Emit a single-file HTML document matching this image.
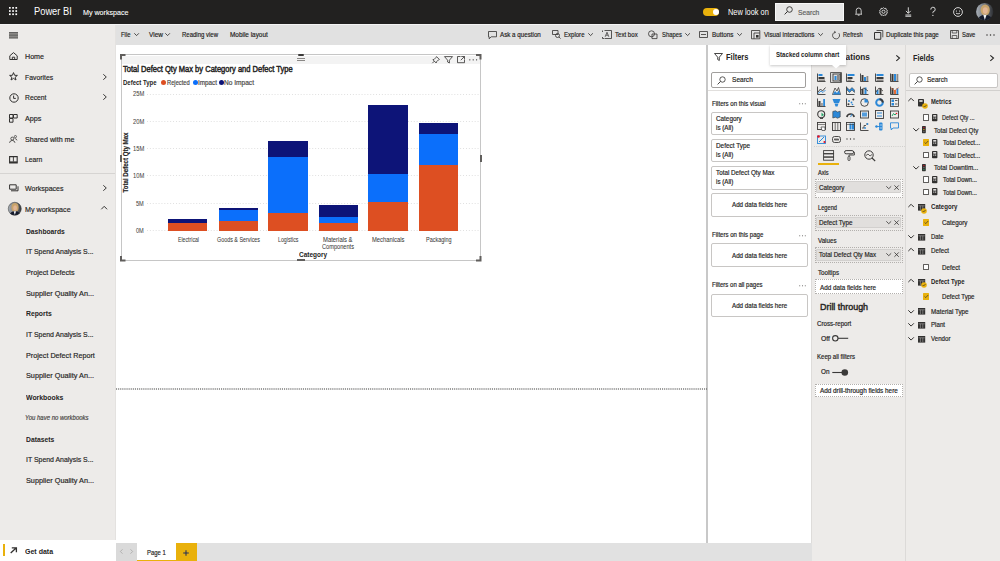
<!DOCTYPE html>
<html><head><meta charset="utf-8">
<style>
*{margin:0;padding:0;box-sizing:border-box}
html,body{width:1000px;height:561px;overflow:hidden;background:#fff;font-family:"Liberation Sans",sans-serif;color:#252423}
.a{position:absolute;white-space:nowrap}
svg.a{overflow:visible}
div.a{-webkit-text-stroke:0.18px currentColor}
</style></head><body>
<div class="a" style="left:0px;top:0px;width:1000px;height:24px;background:#222120;"></div>
<div class="a" style="left:0px;top:24px;width:116px;height:537px;background:#edebe9;"></div>
<div class="a" style="left:115px;top:24px;width:1px;height:516px;background:#e4e2e0;"></div>
<div class="a" style="left:116px;top:24px;width:884px;height:21px;background:#e1e1e1;"></div>
<div class="a" style="left:116px;top:45px;width:591px;height:498px;background:#ffffff;"></div>
<div class="a" style="left:706px;top:45px;width:1.5px;height:498px;background:#c8c8c8;"></div>
<div class="a" style="left:707.5px;top:45px;width:104.5px;height:498px;background:#ffffff;"></div>
<div class="a" style="left:811px;top:45px;width:1.5px;height:516px;background:#dedcda;"></div>
<div class="a" style="left:812px;top:45px;width:94px;height:516px;background:#edebe9;"></div>
<div class="a" style="left:905.3px;top:45px;width:1.5px;height:516px;background:#dcdad8;"></div>
<div class="a" style="left:906px;top:45px;width:94px;height:516px;background:#edebe9;"></div>
<div class="a" style="left:116px;top:543px;width:696px;height:18px;background:#e1e1e1;"></div>
<div class="a" style="left:0px;top:24px;width:1000px;height:1px;background:#f4f4f4;"></div>
<svg class="a" style="left:8.6px;top:7.4px;" width="9" height="9" viewBox="0 0 9 9"><rect x="0.0" y="0.0" width="1.7" height="1.7" fill="#fff"/><rect x="0.0" y="3.2" width="1.7" height="1.7" fill="#fff"/><rect x="0.0" y="6.4" width="1.7" height="1.7" fill="#fff"/><rect x="3.2" y="0.0" width="1.7" height="1.7" fill="#fff"/><rect x="3.2" y="3.2" width="1.7" height="1.7" fill="#fff"/><rect x="3.2" y="6.4" width="1.7" height="1.7" fill="#fff"/><rect x="6.4" y="0.0" width="1.7" height="1.7" fill="#fff"/><rect x="6.4" y="3.2" width="1.7" height="1.7" fill="#fff"/><rect x="6.4" y="6.4" width="1.7" height="1.7" fill="#fff"/></svg>
<div class="a" style="left:33.60px;top:6.00px;font-size:10px;line-height:11px;color:#ffffff;transform:scaleX(0.9315);transform-origin:0 0;-webkit-text-stroke:0">Power BI</div>
<div class="a" style="left:83.30px;top:8.00px;font-size:7.6px;line-height:9px;color:#ffffff;transform:scaleX(0.9375);transform-origin:0 0;-webkit-text-stroke:0.1px currentColor">My workspace</div>
<div class="a" style="left:702.9px;top:7.5px;width:16.6px;height:8.5px;background:#e9b10c;border-radius:4.25px"></div>
<div class="a" style="left:712.8px;top:8.9px;width:5.8px;height:5.8px;background:#fff;border-radius:50%"></div>
<div class="a" style="left:727.60px;top:8.00px;font-size:8.2px;line-height:9px;color:#ffffff;transform:scaleX(0.9054);transform-origin:0 0;-webkit-text-stroke:0">New look on</div>
<div class="a" style="left:775.3px;top:2.9px;width:68.6px;height:17.9px;background:#e6e6e6;border:1px solid #f8f8f8"></div>
<svg class="a" style="left:784px;top:6px;" width="9" height="9" viewBox="0 0 9 9"><circle cx="5.5" cy="3.5" r="2.8" fill="none" stroke="#323130" stroke-width="0.9"/><path d="M3.5 5.5L0.6 8.4" stroke="#323130" stroke-width="1"/></svg>
<div class="a" style="left:797.50px;top:8.00px;font-size:7.2px;line-height:9px;color:#605e5c;transform:scaleX(0.9350);transform-origin:0 0;">Search</div>
<svg class="a" style="left:854.6px;top:7.3px;" width="7.4" height="8.8" viewBox="0 0 7.4 8.8"><path d="M1.2 6.6V3.6A2.5 2.6 0 0 1 6.2 3.6V6.6L6.9 7.2H0.5Z" fill="none" stroke="#ffffff" stroke-width="0.75"/><path d="M2.8 8.2H4.6" stroke="#ffffff" stroke-width="0.75"/></svg>
<svg class="a" style="left:878.9px;top:7.1px;" width="9" height="9" viewBox="0 0 9 9"><path d="M4.5 0.6L5.5 1.6L6.9 1.3L7.2 2.7L8.4 3.5L7.8 4.8L8.4 6.1L7.2 6.8L6.9 8.2L5.5 7.9L4.5 8.9L3.5 7.9L2.1 8.2L1.8 6.8L0.6 6.1L1.2 4.8L0.6 3.5L1.8 2.7L2.1 1.3L3.5 1.6Z" fill="none" stroke="#fff" stroke-width="0.75"/><circle cx="4.5" cy="4.75" r="1.6" fill="none" stroke="#fff" stroke-width="0.75"/></svg>
<svg class="a" style="left:904.8px;top:6.8px;" width="6.6" height="9.8" viewBox="0 0 6.6 9.8"><path d="M3.3 0.3V6.2M0.9 3.9L3.3 6.3L5.7 3.9M0.4 8H6.2M0.4 9.3H6.2" fill="none" stroke="#ffffff" stroke-width="0.8"/></svg>
<svg class="a" style="left:930.4px;top:7.3px;" width="6" height="9.4" viewBox="0 0 6 9.4"><path d="M0.8 2.6A2.2 2.2 0 1 1 3.2 4.6Q2.9 5 2.9 6.2" fill="none" stroke="#ffffff" stroke-width="0.8"/><circle cx="2.9" cy="8.4" r="0.55" fill="#ffffff"/></svg>
<svg class="a" style="left:953.4px;top:6.6px;" width="10" height="10" viewBox="0 0 10 10"><circle cx="5" cy="5" r="4.4" fill="none" stroke="#ffffff" stroke-width="0.8"/><circle cx="3.4" cy="4" r="0.6" fill="#ffffff"/><circle cx="6.6" cy="4" r="0.6" fill="#ffffff"/><path d="M3 6.2Q5 7.6 7 6.2" fill="none" stroke="#ffffff" stroke-width="0.75"/></svg>
<svg class="a" style="left:976.2px;top:3.4px;" width="17.4" height="17.4" viewBox="0 0 17.4 17.4"><defs><clipPath id="av"><circle cx="8.7" cy="8.7" r="8.6"/></clipPath><linearGradient id="avg" x1="0" x2="1"><stop offset="0" stop-color="#a9b0b8"/><stop offset="0.55" stop-color="#6a6e74"/><stop offset="1" stop-color="#26282c"/></linearGradient></defs><g clip-path="url(#av)"><rect width="18" height="18" fill="url(#avg)"/><ellipse cx="9.2" cy="7" rx="4.6" ry="5.6" fill="#c8a46c"/><ellipse cx="9.3" cy="7.6" rx="2.5" ry="3.3" fill="#e2b595"/><path d="M1.5 18Q2.5 12 9 11.8Q15.5 12 16.8 18Z" fill="#141a2c"/><path d="M7.3 11.8L8.8 17L10.6 11.8Z" fill="#f2f4f8"/></g></svg>
<svg class="a" style="left:9.3px;top:31.8px;" width="9" height="7" viewBox="0 0 9 7"><rect x="0" y="0" width="9" height="6.4" fill="#8a8886"/><path d="M0 0.5H9M0 3.2H9M0 5.9H9" stroke="#5f5e5c" stroke-width="0.9"/></svg>
<div class="a" style="left:24.90px;top:52.00px;font-size:8.0px;line-height:9px;color:#252423;transform:scaleX(0.8902);transform-origin:0 0;">Home</div>
<div class="a" style="left:24.90px;top:73.00px;font-size:8.0px;line-height:9px;color:#252423;transform:scaleX(0.8539);transform-origin:0 0;">Favorites</div>
<div class="a" style="left:24.90px;top:93.00px;font-size:8.0px;line-height:9px;color:#252423;transform:scaleX(0.8439);transform-origin:0 0;">Recent</div>
<div class="a" style="left:24.90px;top:114.00px;font-size:8.0px;line-height:9px;color:#252423;transform:scaleX(0.8994);transform-origin:0 0;">Apps</div>
<div class="a" style="left:24.90px;top:135.00px;font-size:8.0px;line-height:9px;color:#252423;transform:scaleX(0.8904);transform-origin:0 0;">Shared with me</div>
<div class="a" style="left:24.90px;top:155.00px;font-size:8.0px;line-height:9px;color:#252423;transform:scaleX(0.8501);transform-origin:0 0;">Learn</div>
<div class="a" style="left:24.90px;top:184.00px;font-size:8.0px;line-height:9px;color:#252423;transform:scaleX(0.8775);transform-origin:0 0;">Workspaces</div>
<div class="a" style="left:24.90px;top:205.00px;font-size:8.0px;line-height:9px;color:#252423;transform:scaleX(0.8919);transform-origin:0 0;">My workspace</div>
<svg class="a" style="left:9px;top:51.8px;" width="9" height="8" viewBox="0 0 9 8"><path d="M0.8 3.8L4.5 0.6L8.2 3.8V7.5H0.8Z" fill="none" stroke="#323130" stroke-width="1.0"/><path d="M3.3 7.5V5.2H5.7V7.5" fill="none" stroke="#323130" stroke-width="1.0"/></svg>
<svg class="a" style="left:9px;top:72.3px;" width="9" height="9" viewBox="0 0 9 9"><path d="M4.5 0.6L5.6 3.3L8.4 3.4L6.2 5.2L7 8L4.5 6.4L2 8L2.8 5.2L0.6 3.4L3.4 3.3Z" fill="none" stroke="#323130" stroke-width="1.0"/></svg>
<svg class="a" style="left:8.6px;top:93px;" width="10" height="10" viewBox="0 0 10 10"><circle cx="5" cy="5" r="4.2" fill="none" stroke="#323130" stroke-width="1.0"/><path d="M4.6 2.6V5.4H6.8" fill="none" stroke="#323130" stroke-width="1.0"/></svg>
<svg class="a" style="left:8.8px;top:113.8px;" width="9" height="9" viewBox="0 0 9 9"><path d="M0.5 0.5H4V4H0.5ZM0.5 4.5H4V8.2H0.5ZM4.5 0.5H8.2V4H4.5Z" fill="none" stroke="#323130" stroke-width="1.0"/></svg>
<svg class="a" style="left:9.3px;top:134.6px;" width="8.5" height="8" viewBox="0 0 8.5 8"><circle cx="3.3" cy="3.6" r="1.5" fill="none" stroke="#323130" stroke-width="0.8"/><path d="M0.5 7.8Q1 5.4 3.3 5.4Q5.5 5.4 6 7.8" fill="none" stroke="#323130" stroke-width="0.8"/><circle cx="6.4" cy="1.6" r="1.1" fill="none" stroke="#323130" stroke-width="0.7"/><path d="M5.8 3.6Q7.6 3.6 8 5.4" fill="none" stroke="#323130" stroke-width="0.7"/></svg>
<svg class="a" style="left:8.8px;top:155.6px;" width="9" height="7.6" viewBox="0 0 9 7.6"><path d="M0.6 0.6H8.2V7H0.6Z" fill="none" stroke="#323130" stroke-width="1.1"/><path d="M4.4 0.6V5.6" fill="none" stroke="#323130" stroke-width="0.9"/><rect x="0.6" y="5.4" width="7.6" height="1.6" fill="#323130"/></svg>
<svg class="a" style="left:8.5px;top:184.2px;" width="10" height="8" viewBox="0 0 10 8"><path d="M0.6 0.8H7.2V5.2H0.6Z" fill="none" stroke="#323130" stroke-width="1.0"/><path d="M2 6.8H9V2.3" fill="none" stroke="#323130" stroke-width="1.0"/></svg>
<svg class="a" style="left:7.8px;top:201.8px;" width="13.5" height="13.5" viewBox="0 0 13.5 13.5"><defs><clipPath id="av2"><circle cx="6.75" cy="6.75" r="6.6"/></clipPath><linearGradient id="avg2" x1="0" x2="1"><stop offset="0" stop-color="#a9b0b8"/><stop offset="0.6" stop-color="#6a6e74"/><stop offset="1" stop-color="#303236"/></linearGradient></defs><g clip-path="url(#av2)"><rect width="14" height="14" fill="url(#avg2)"/><ellipse cx="7" cy="5.4" rx="3.6" ry="4.4" fill="#c8a46c"/><ellipse cx="7.1" cy="5.9" rx="1.9" ry="2.6" fill="#e2b595"/><path d="M1 14Q2 9.3 7 9.2Q12 9.3 13 14Z" fill="#141a2c"/><path d="M5.7 9.2L6.8 13L8.1 9.2Z" fill="#f2f4f8"/></g><circle cx="6.75" cy="6.75" r="6.5" fill="none" stroke="#3b3a39" stroke-width="0.5"/></svg>
<svg class="a" style="left:103px;top:73.5px;" width="3.6" height="6" viewBox="0 0 3.6 6"><path d="M0.3 0.3L3.3000000000000003 3.0L0.3 5.7" fill="none" stroke="#252423" stroke-width="0.9"/></svg>
<svg class="a" style="left:103px;top:94.1px;" width="3.6" height="6" viewBox="0 0 3.6 6"><path d="M0.3 0.3L3.3000000000000003 3.0L0.3 5.7" fill="none" stroke="#252423" stroke-width="0.9"/></svg>
<svg class="a" style="left:103px;top:185.3px;" width="3.6" height="6" viewBox="0 0 3.6 6"><path d="M0.3 0.3L3.3000000000000003 3.0L0.3 5.7" fill="none" stroke="#252423" stroke-width="0.9"/></svg>
<svg class="a" style="left:101.3px;top:206.2px;" width="6.4" height="3.6" viewBox="0 0 6.4 3.6"><path d="M0.3 3.3000000000000003L3.2 0.3L6.1000000000000005 3.3000000000000003" fill="none" stroke="#252423" stroke-width="0.9"/></svg>
<div class="a" style="left:0px;top:173.2px;width:115px;height:0.8px;background:#d6d4d2;"></div>
<div class="a" style="left:26.00px;top:227.00px;font-size:7.8px;line-height:9px;color:#252423;font-weight:bold;-webkit-text-stroke:0;transform:scaleX(0.8610);transform-origin:0 0;">Dashboards</div>
<div class="a" style="left:26.00px;top:247.00px;font-size:7.8px;line-height:9px;color:#252423;transform:scaleX(0.8865);transform-origin:0 0;">IT Spend Analysis S...</div>
<div class="a" style="left:26.00px;top:268.00px;font-size:7.8px;line-height:9px;color:#252423;transform:scaleX(0.9191);transform-origin:0 0;">Project Defects</div>
<div class="a" style="left:26.00px;top:289.00px;font-size:7.8px;line-height:9px;color:#252423;transform:scaleX(0.9339);transform-origin:0 0;">Supplier Quality An...</div>
<div class="a" style="left:26.00px;top:309.00px;font-size:7.8px;line-height:9px;color:#252423;font-weight:bold;-webkit-text-stroke:0;transform:scaleX(0.8721);transform-origin:0 0;">Reports</div>
<div class="a" style="left:26.00px;top:330.00px;font-size:7.8px;line-height:9px;color:#252423;transform:scaleX(0.8865);transform-origin:0 0;">IT Spend Analysis S...</div>
<div class="a" style="left:26.00px;top:351.00px;font-size:7.8px;line-height:9px;color:#252423;transform:scaleX(0.9229);transform-origin:0 0;">Project Defect Report</div>
<div class="a" style="left:26.00px;top:371.00px;font-size:7.8px;line-height:9px;color:#252423;transform:scaleX(0.9339);transform-origin:0 0;">Supplier Quality An...</div>
<div class="a" style="left:26.00px;top:393.00px;font-size:7.8px;line-height:9px;color:#252423;font-weight:bold;-webkit-text-stroke:0;transform:scaleX(0.8839);transform-origin:0 0;">Workbooks</div>
<div class="a" style="left:26.00px;top:435.00px;font-size:7.8px;line-height:9px;color:#252423;font-weight:bold;-webkit-text-stroke:0;transform:scaleX(0.8673);transform-origin:0 0;">Datasets</div>
<div class="a" style="left:26.00px;top:455.00px;font-size:7.8px;line-height:9px;color:#252423;transform:scaleX(0.8865);transform-origin:0 0;">IT Spend Analysis S...</div>
<div class="a" style="left:26.00px;top:476.00px;font-size:7.8px;line-height:9px;color:#252423;transform:scaleX(0.9339);transform-origin:0 0;">Supplier Quality An...</div>
<div class="a" style="left:25.20px;top:414.00px;font-size:6.8px;line-height:7px;color:#484644;font-style:italic;transform:scaleX(0.8812);transform-origin:0 0;">You have no workbooks</div>
<div class="a" style="left:0px;top:540px;width:116px;height:21px;background:#ffffff;"></div>
<div class="a" style="left:2.9px;top:544.3px;width:2.3px;height:12px;background:#e9b10c;"></div>
<svg class="a" style="left:9.6px;top:547.2px;" width="7.5" height="6.5" viewBox="0 0 7.5 6.5"><path d="M0.7 5.9L6.4 0.8M1.8 0.8H6.4V5.2" fill="none" stroke="#323130" stroke-width="1.3"/></svg>
<div class="a" style="left:24.70px;top:547.00px;font-size:7.5px;line-height:9px;color:#252423;font-weight:bold;-webkit-text-stroke:0;transform:scaleX(0.9362);transform-origin:0 0;">Get data</div>
<div class="a" style="left:121.20px;top:31.00px;font-size:6.9px;line-height:7px;color:#252423;transform:scaleX(0.8551);transform-origin:0 0;">File</div>
<svg class="a" style="left:133.6px;top:33.2px;" width="5.2" height="2.9" viewBox="0 0 5.2 2.9"><path d="M0.3 0.3L2.6 2.6L4.9 0.3" fill="none" stroke="#252423" stroke-width="0.8"/></svg>
<div class="a" style="left:148.70px;top:31.00px;font-size:6.9px;line-height:7px;color:#252423;transform:scaleX(0.9384);transform-origin:0 0;">View</div>
<svg class="a" style="left:165.2px;top:33.2px;" width="5.2" height="2.9" viewBox="0 0 5.2 2.9"><path d="M0.3 0.3L2.6 2.6L4.9 0.3" fill="none" stroke="#252423" stroke-width="0.8"/></svg>
<div class="a" style="left:181.60px;top:31.00px;font-size:6.9px;line-height:7px;color:#252423;transform:scaleX(0.8701);transform-origin:0 0;">Reading view</div>
<div class="a" style="left:229.70px;top:31.00px;font-size:6.9px;line-height:7px;color:#252423;transform:scaleX(0.9308);transform-origin:0 0;">Mobile layout</div>
<svg class="a" style="left:487.7px;top:30.5px;" width="9" height="8.5" viewBox="0 0 9 8.5"><path d="M0.5 0.5H8.5V5.8H3.2L1.2 7.8V5.8H0.5Z" fill="none" stroke="#323130" stroke-width="0.8"/></svg>
<div class="a" style="left:500.20px;top:31.00px;font-size:6.9px;line-height:7px;color:#252423;transform:scaleX(0.9026);transform-origin:0 0;">Ask a question</div>
<svg class="a" style="left:551.5px;top:30.3px;" width="9" height="9" viewBox="0 0 9 9"><path d="M0.5 0.5H6V4.5H0.5Z" fill="none" stroke="#323130" stroke-width="0.8"/><circle cx="5.5" cy="5.5" r="2" fill="none" stroke="#323130" stroke-width="0.8"/><path d="M6.9 6.9L8.6 8.6" stroke="#323130" stroke-width="0.8"/></svg>
<div class="a" style="left:564.00px;top:31.00px;font-size:6.9px;line-height:7px;color:#252423;transform:scaleX(0.8770);transform-origin:0 0;">Explore</div>
<svg class="a" style="left:587.8px;top:33.2px;" width="5.2" height="2.9" viewBox="0 0 5.2 2.9"><path d="M0.3 0.3L2.6 2.6L4.9 0.3" fill="none" stroke="#252423" stroke-width="0.8"/></svg>
<svg class="a" style="left:602px;top:30.3px;" width="10" height="9" viewBox="0 0 10 9"><path d="M2.5 0.5H9.5V8.5H2.5M0.5 0.5V2M0.5 7V8.5H2" fill="none" stroke="#323130" stroke-width="0.8"/><path d="M3.2 6.8L5 2.2L6.8 6.8M3.8 5.2H6.2" fill="none" stroke="#323130" stroke-width="0.7"/></svg>
<div class="a" style="left:615.30px;top:31.00px;font-size:6.9px;line-height:7px;color:#252423;transform:scaleX(0.8842);transform-origin:0 0;">Text box</div>
<svg class="a" style="left:648.3px;top:30.3px;" width="9.5" height="9" viewBox="0 0 9.5 9"><circle cx="3.5" cy="3.8" r="3" fill="none" stroke="#323130" stroke-width="0.8"/><path d="M4 4H9V8.6H4Z" fill="none" stroke="#323130" stroke-width="0.8"/></svg>
<div class="a" style="left:661.50px;top:31.00px;font-size:6.9px;line-height:7px;color:#252423;transform:scaleX(0.8471);transform-origin:0 0;">Shapes</div>
<svg class="a" style="left:685.3px;top:33.2px;" width="5.2" height="2.9" viewBox="0 0 5.2 2.9"><path d="M0.3 0.3L2.6 2.6L4.9 0.3" fill="none" stroke="#252423" stroke-width="0.8"/></svg>
<svg class="a" style="left:698.8px;top:31.2px;" width="9" height="7" viewBox="0 0 9 7"><path d="M0.5 0.5H8.5V6.5H0.5Z" fill="none" stroke="#323130" stroke-width="0.8"/><path d="M2 3.5H7" stroke="#323130" stroke-width="0.8"/></svg>
<div class="a" style="left:711.60px;top:31.00px;font-size:6.9px;line-height:7px;color:#252423;transform:scaleX(0.9155);transform-origin:0 0;">Buttons</div>
<svg class="a" style="left:736.8px;top:33.2px;" width="5.2" height="2.9" viewBox="0 0 5.2 2.9"><path d="M0.3 0.3L2.6 2.6L4.9 0.3" fill="none" stroke="#252423" stroke-width="0.8"/></svg>
<svg class="a" style="left:750.8px;top:30.2px;" width="9.5" height="9.5" viewBox="0 0 9.5 9.5"><path d="M0.5 0.5H8.8V8.8H0.5Z" fill="none" stroke="#323130" stroke-width="0.8"/><path d="M3 3H8.8M3 3V8.8" stroke="#323130" stroke-width="0.8"/><rect x="5" y="5" width="2.6" height="2.6" fill="#323130"/></svg>
<div class="a" style="left:763.60px;top:31.00px;font-size:6.9px;line-height:7px;color:#252423;transform:scaleX(0.9033);transform-origin:0 0;">Visual interactions</div>
<svg class="a" style="left:817.8px;top:33.2px;" width="5.2" height="2.9" viewBox="0 0 5.2 2.9"><path d="M0.3 0.3L2.6 2.6L4.9 0.3" fill="none" stroke="#252423" stroke-width="0.8"/></svg>
<svg class="a" style="left:831.8px;top:30.6px;" width="8.5" height="8.5" viewBox="0 0 8.5 8.5"><path d="M6.8 2.2A3.5 3.5 0 1 1 3.2 1" fill="none" stroke="#323130" stroke-width="0.8"/><path d="M2.2 0.2L3.6 1.1L2.6 2.4" fill="none" stroke="#323130" stroke-width="0.7"/></svg>
<div class="a" style="left:842.80px;top:31.00px;font-size:6.9px;line-height:7px;color:#252423;transform:scaleX(0.8119);transform-origin:0 0;">Refresh</div>
<svg class="a" style="left:873.6px;top:29.8px;" width="9.5" height="10" viewBox="0 0 9.5 10"><path d="M0.5 2.5H6.8V9.3H0.5Z" fill="none" stroke="#323130" stroke-width="1"/><path d="M2.5 0.5H8.8V7.3" fill="none" stroke="#323130" stroke-width="0.8"/></svg>
<div class="a" style="left:886.40px;top:31.00px;font-size:6.9px;line-height:7px;color:#252423;transform:scaleX(0.9009);transform-origin:0 0;">Duplicate this page</div>
<svg class="a" style="left:950.4px;top:30.2px;" width="9" height="9" viewBox="0 0 9 9"><path d="M0.5 0.5H8.5V8.5H0.5Z" fill="none" stroke="#323130" stroke-width="0.8"/><path d="M2.2 0.5V3H6.8V0.5M2.2 8.5V5.5H6.8V8.5" fill="none" stroke="#323130" stroke-width="0.7"/></svg>
<div class="a" style="left:962.40px;top:31.00px;font-size:6.9px;line-height:7px;color:#252423;transform:scaleX(0.8461);transform-origin:0 0;">Save</div>
<svg class="a" style="left:986.4px;top:34px;" width="9" height="2" viewBox="0 0 9 2"><circle cx="1" cy="1" r="0.75" fill="#323130"/><circle cx="4.5" cy="1" r="0.75" fill="#323130"/><circle cx="8" cy="1" r="0.75" fill="#323130"/></svg>
<div class="a" style="left:120.5px;top:54.1px;width:360.5px;height:206.9px;border:1px solid #c6c6c6"></div>
<div class="a" style="left:121.5px;top:55.5px;width:358.5px;height:8.8px;background:#f3f3f3;"></div>
<svg class="a" style="left:120px;top:54px;" width="5.5" height="5.5" viewBox="0 0 5.5 5.5"><path d="M1 5.5V1H5.5" fill="none" stroke="#605e5c" stroke-width="2"/></svg>
<svg class="a" style="left:476px;top:54px;" width="5.5" height="5.5" viewBox="0 0 5.5 5.5"><path d="M0 1H4.5V5.5" fill="none" stroke="#605e5c" stroke-width="2"/></svg>
<svg class="a" style="left:120px;top:256px;" width="5.5" height="5.5" viewBox="0 0 5.5 5.5"><path d="M1 0V4.5H5.5" fill="none" stroke="#605e5c" stroke-width="2"/></svg>
<svg class="a" style="left:476px;top:256px;" width="5.5" height="5.5" viewBox="0 0 5.5 5.5"><path d="M0 4.5H4.5V0" fill="none" stroke="#605e5c" stroke-width="2"/></svg>
<div class="a" style="left:297.6px;top:53.6px;width:6.8px;height:2.3px;background:#3b3a39;border-radius:1px"></div>
<div class="a" style="left:296.8px;top:58.3px;width:8.2px;height:1.0px;background:#8a8886;"></div>
<div class="a" style="left:296.8px;top:60.3px;width:8.2px;height:1.0px;background:#8a8886;"></div>
<div class="a" style="left:119.5px;top:154.5px;width:2.2px;height:7px;background:#605e5c;"></div>
<div class="a" style="left:479.5px;top:154.5px;width:2.2px;height:7px;background:#605e5c;"></div>
<div class="a" style="left:297px;top:259px;width:7.5px;height:2.2px;background:#605e5c;"></div>
<svg class="a" style="left:431.5px;top:55.9px;" width="8" height="7.5" viewBox="0 0 8 7.5"><path d="M4.5 0.6L7.4 3.5L6.3 4L4.5 5.8L4.2 7L0.9 3.7L2.1 3.4L3.9 1.6Z" fill="none" stroke="#323130" stroke-width="0.8"/><path d="M2.4 5.1L0.3 7.2" stroke="#323130" stroke-width="0.8"/></svg>
<svg class="a" style="left:444px;top:55.9px;" width="9" height="7.5" viewBox="0 0 9 7.5"><path d="M0.5 0.6H8.5L5.4 4.2V7L3.6 6V4.2Z" fill="none" stroke="#323130" stroke-width="0.8"/></svg>
<svg class="a" style="left:457px;top:56px;" width="8" height="7.2" viewBox="0 0 8 7.2"><path d="M3.5 0.5H0.5V6.7H7.5V3.8" fill="none" stroke="#323130" stroke-width="0.8"/><path d="M4.3 0.5H7.5V3.5M7.5 0.5L3.8 4.2" fill="none" stroke="#323130" stroke-width="0.8"/></svg>
<svg class="a" style="left:469px;top:59.2px;" width="8.5" height="1.6" viewBox="0 0 8.5 1.6"><circle cx="0.8" cy="0.8" r="0.65" fill="#323130"/><circle cx="4.2" cy="0.8" r="0.65" fill="#323130"/><circle cx="7.6" cy="0.8" r="0.65" fill="#323130"/></svg>
<div class="a" style="left:123.20px;top:64.00px;font-size:8.6px;line-height:10px;color:#252423;transform:scaleX(0.8779);transform-origin:0 0;-webkit-text-stroke:0.45px currentColor">Total Defect Qty Max by Category and Defect Type</div>
<div class="a" style="left:123.20px;top:79.00px;font-size:6.6px;line-height:7px;color:#252423;font-weight:bold;-webkit-text-stroke:0;transform:scaleX(0.9081);transform-origin:0 0;">Defect Type</div>
<div class="a" style="left:160.7px;top:80.4px;width:5.0px;height:5.0px;background:#dd4f22;border-radius:50%"></div>
<div class="a" style="left:192.6px;top:80.4px;width:5.0px;height:5.0px;background:#0b6ffb;border-radius:50%"></div>
<div class="a" style="left:219.2px;top:80.4px;width:5.0px;height:5.0px;background:#0d1478;border-radius:50%"></div>
<div class="a" style="left:166.90px;top:79.00px;font-size:6.8px;line-height:7px;color:#484644;transform:scaleX(0.8461);transform-origin:0 0;">Rejected</div>
<div class="a" style="left:198.00px;top:79.00px;font-size:6.8px;line-height:7px;color:#484644;transform:scaleX(0.9311);transform-origin:0 0;">Impact</div>
<div class="a" style="left:223.70px;top:79.00px;font-size:6.8px;line-height:7px;color:#484644;transform:scaleX(0.9682);transform-origin:0 0;">No Impact</div>
<svg class="a" style="left:147px;top:229.8px;" width="332" height="1" viewBox="0 0 332 1"><line x1="0" y1="0.5" x2="332" y2="0.5" stroke="#d4d4d4" stroke-width="0.8" stroke-dasharray="0.9 2"/></svg>
<div class="a" style="left:136.10px;top:227.00px;font-size:6.6px;line-height:7px;color:#484644;transform:scaleX(0.8504);transform-origin:0 0;-webkit-text-stroke:0.05px currentColor">0M</div>
<svg class="a" style="left:147px;top:202.54000000000002px;" width="332" height="1" viewBox="0 0 332 1"><line x1="0" y1="0.5" x2="332" y2="0.5" stroke="#d4d4d4" stroke-width="0.8" stroke-dasharray="0.9 2"/></svg>
<div class="a" style="left:136.10px;top:200.00px;font-size:6.6px;line-height:7px;color:#484644;transform:scaleX(0.8504);transform-origin:0 0;-webkit-text-stroke:0.05px currentColor">5M</div>
<svg class="a" style="left:147px;top:175.28px;" width="332" height="1" viewBox="0 0 332 1"><line x1="0" y1="0.5" x2="332" y2="0.5" stroke="#d4d4d4" stroke-width="0.8" stroke-dasharray="0.9 2"/></svg>
<div class="a" style="left:132.60px;top:172.00px;font-size:6.6px;line-height:7px;color:#484644;transform:scaleX(0.8809);transform-origin:0 0;-webkit-text-stroke:0.05px currentColor">10M</div>
<svg class="a" style="left:147px;top:148.02px;" width="332" height="1" viewBox="0 0 332 1"><line x1="0" y1="0.5" x2="332" y2="0.5" stroke="#d4d4d4" stroke-width="0.8" stroke-dasharray="0.9 2"/></svg>
<div class="a" style="left:132.60px;top:145.00px;font-size:6.6px;line-height:7px;color:#484644;transform:scaleX(0.8809);transform-origin:0 0;-webkit-text-stroke:0.05px currentColor">15M</div>
<svg class="a" style="left:147px;top:120.76px;" width="332" height="1" viewBox="0 0 332 1"><line x1="0" y1="0.5" x2="332" y2="0.5" stroke="#d4d4d4" stroke-width="0.8" stroke-dasharray="0.9 2"/></svg>
<div class="a" style="left:132.60px;top:118.00px;font-size:6.6px;line-height:7px;color:#484644;transform:scaleX(0.8809);transform-origin:0 0;-webkit-text-stroke:0.05px currentColor">20M</div>
<svg class="a" style="left:147px;top:93.5px;" width="332" height="1" viewBox="0 0 332 1"><line x1="0" y1="0.5" x2="332" y2="0.5" stroke="#d4d4d4" stroke-width="0.8" stroke-dasharray="0.9 2"/></svg>
<div class="a" style="left:132.60px;top:90.00px;font-size:6.6px;line-height:7px;color:#484644;transform:scaleX(0.8809);transform-origin:0 0;-webkit-text-stroke:0.05px currentColor">25M</div>
<div class="a" style="left:168.4px;top:219px;width:39.099999999999994px;height:4px;background:#0d1478;"></div>
<div class="a" style="left:168.4px;top:223px;width:39.099999999999994px;height:8px;background:#dd4f22;"></div>
<div class="a" style="left:218.5px;top:208px;width:39.10000000000002px;height:2px;background:#0d1478;"></div>
<div class="a" style="left:218.5px;top:210px;width:39.10000000000002px;height:11px;background:#0b6ffb;"></div>
<div class="a" style="left:218.5px;top:221px;width:39.10000000000002px;height:10px;background:#dd4f22;"></div>
<div class="a" style="left:268.4px;top:141px;width:39.30000000000001px;height:16px;background:#0d1478;"></div>
<div class="a" style="left:268.4px;top:157px;width:39.30000000000001px;height:56px;background:#0b6ffb;"></div>
<div class="a" style="left:268.4px;top:213px;width:39.30000000000001px;height:18px;background:#dd4f22;"></div>
<div class="a" style="left:318.6px;top:205px;width:39.19999999999999px;height:12px;background:#0d1478;"></div>
<div class="a" style="left:318.6px;top:217px;width:39.19999999999999px;height:6px;background:#0b6ffb;"></div>
<div class="a" style="left:318.6px;top:223px;width:39.19999999999999px;height:8px;background:#dd4f22;"></div>
<div class="a" style="left:368.4px;top:105px;width:39.400000000000034px;height:69px;background:#0d1478;"></div>
<div class="a" style="left:368.4px;top:174px;width:39.400000000000034px;height:28px;background:#0b6ffb;"></div>
<div class="a" style="left:368.4px;top:202px;width:39.400000000000034px;height:29px;background:#dd4f22;"></div>
<div class="a" style="left:418.7px;top:123px;width:39.19999999999999px;height:11px;background:#0d1478;"></div>
<div class="a" style="left:418.7px;top:134px;width:39.19999999999999px;height:31px;background:#0b6ffb;"></div>
<div class="a" style="left:418.7px;top:165px;width:39.19999999999999px;height:66px;background:#dd4f22;"></div>
<div class="a" style="left:177.50px;top:236.00px;font-size:6.7px;line-height:7px;color:#3b3a39;transform:scaleX(0.7737);transform-origin:0 0;-webkit-text-stroke:0.05px currentColor">Electrical</div>
<div class="a" style="left:216.50px;top:236.00px;font-size:6.7px;line-height:7px;color:#3b3a39;transform:scaleX(0.8033);transform-origin:0 0;-webkit-text-stroke:0.05px currentColor">Goods &amp; Services</div>
<div class="a" style="left:277.75px;top:236.00px;font-size:6.7px;line-height:7px;color:#3b3a39;transform:scaleX(0.7875);transform-origin:0 0;-webkit-text-stroke:0.05px currentColor">Logistics</div>
<div class="a" style="left:371.75px;top:236.00px;font-size:6.7px;line-height:7px;color:#3b3a39;transform:scaleX(0.8743);transform-origin:0 0;-webkit-text-stroke:0.05px currentColor">Mechanicals</div>
<div class="a" style="left:425.55px;top:236.00px;font-size:6.7px;line-height:7px;color:#3b3a39;transform:scaleX(0.8164);transform-origin:0 0;-webkit-text-stroke:0.05px currentColor">Packaging</div>
<div class="a" style="left:323.45px;top:236.00px;font-size:6.7px;line-height:7px;color:#3b3a39;transform:scaleX(0.8818);transform-origin:0 0;-webkit-text-stroke:0.05px currentColor">Materials &amp;</div>
<div class="a" style="left:322.20px;top:243.00px;font-size:6.7px;line-height:7px;color:#3b3a39;transform:scaleX(0.8438);transform-origin:0 0;-webkit-text-stroke:0.05px currentColor">Components</div>
<div class="a" style="left:299.30px;top:251.00px;font-size:6.6px;line-height:7px;color:#252423;font-weight:bold;-webkit-text-stroke:0;transform:scaleX(0.9792);transform-origin:0 0;">Category</div>
<div class="a" style="left:125.3px;top:162.5px;width:0;height:0"><div class="a" style="left:-40px;top:-3.5px;width:80px;height:7px;transform:rotate(-90deg) scaleX(0.97);text-align:center;font-size:6.3px;line-height:7px;font-weight:bold;color:#252423">Total Defect Qty Max</div></div>
<svg class="a" style="left:116px;top:387.5px;" width="591" height="2" viewBox="0 0 591 2"><line x1="0" y1="1" x2="591" y2="1" stroke="#3b3a39" stroke-width="1.1" stroke-dasharray="1.1 1"/></svg>
<svg class="a" style="left:713.7px;top:52.7px;" width="9" height="8" viewBox="0 0 9 8"><path d="M0.5 0.5H8.5L5.3 4.2V7.5L3.7 6.5V4.2Z" fill="none" stroke="#323130" stroke-width="0.9"/></svg>
<div class="a" style="left:726.20px;top:52.00px;font-size:8.3px;line-height:10px;color:#252423;font-weight:bold;-webkit-text-stroke:0;transform:scaleX(0.8994);transform-origin:0 0;">Filters</div>
<div class="a" style="left:711.2px;top:72.4px;width:94.6px;height:15.3px;border:1px solid #a19f9d;border-radius:2px;background:#fff"></div>
<svg class="a" style="left:717px;top:75.8px;" width="9" height="9" viewBox="0 0 9 9"><circle cx="5.5" cy="3.5" r="2.7" fill="none" stroke="#323130" stroke-width="0.8"/><path d="M3.5 5.5L0.6 8.4" stroke="#323130" stroke-width="0.9"/></svg>
<div class="a" style="left:732.20px;top:76.00px;font-size:7.0px;line-height:7px;color:#252423;transform:scaleX(0.9375);transform-origin:0 0;">Search</div>
<div class="a" style="left:707.5px;top:89.8px;width:104px;height:0.9px;background:#e1dfdd;"></div>
<div class="a" style="left:711.90px;top:100.00px;font-size:6.5px;line-height:7px;color:#252423;transform:scaleX(0.9391);transform-origin:0 0;">Filters on this visual</div>
<svg class="a" style="left:798.5px;top:103.2px;" width="7" height="1.4" viewBox="0 0 7 1.4"><circle cx="0.7" cy="0.7" r="0.55" fill="#605e5c"/><circle cx="3.5" cy="0.7" r="0.55" fill="#605e5c"/><circle cx="6.3" cy="0.7" r="0.55" fill="#605e5c"/></svg>
<div class="a" style="left:711.1px;top:111.8px;width:96.5px;height:23.60000000000001px;border:1px solid #c8c6c4;border-radius:2px;background:#fff"></div>
<div class="a" style="left:716.00px;top:115.00px;font-size:6.5px;line-height:7px;color:#252423;transform:scaleX(0.9744);transform-origin:0 0;">Category</div>
<div class="a" style="left:716.00px;top:124.00px;font-size:6.5px;line-height:7px;color:#252423;transform:scaleX(0.9522);transform-origin:0 0;">is (All)</div>
<div class="a" style="left:711.1px;top:138.8px;width:96.5px;height:23.5px;border:1px solid #c8c6c4;border-radius:2px;background:#fff"></div>
<div class="a" style="left:716.00px;top:142.00px;font-size:6.5px;line-height:7px;color:#252423;transform:scaleX(0.9833);transform-origin:0 0;">Defect Type</div>
<div class="a" style="left:716.00px;top:151.00px;font-size:6.5px;line-height:7px;color:#252423;transform:scaleX(0.9522);transform-origin:0 0;">is (All)</div>
<div class="a" style="left:711.1px;top:166.0px;width:96.5px;height:23.5px;border:1px solid #c8c6c4;border-radius:2px;background:#fff"></div>
<div class="a" style="left:716.00px;top:169.00px;font-size:6.5px;line-height:7px;color:#252423;transform:scaleX(0.9680);transform-origin:0 0;">Total Defect Qty Max</div>
<div class="a" style="left:716.00px;top:178.00px;font-size:6.5px;line-height:7px;color:#252423;transform:scaleX(0.9522);transform-origin:0 0;">is (All)</div>
<div class="a" style="left:711.1px;top:193.1px;width:96.5px;height:23.599999999999994px;border:1px solid #c8c6c4;border-radius:2px;background:#fff"></div>
<div class="a" style="left:731.95px;top:201.00px;font-size:6.5px;line-height:7px;color:#252423;transform:scaleX(0.9563);transform-origin:0 0;">Add data fields here</div>
<div class="a" style="left:711.90px;top:231.00px;font-size:6.5px;line-height:7px;color:#252423;transform:scaleX(0.9341);transform-origin:0 0;">Filters on this page</div>
<svg class="a" style="left:798.5px;top:234.6px;" width="7" height="1.4" viewBox="0 0 7 1.4"><circle cx="0.7" cy="0.7" r="0.55" fill="#605e5c"/><circle cx="3.5" cy="0.7" r="0.55" fill="#605e5c"/><circle cx="6.3" cy="0.7" r="0.55" fill="#605e5c"/></svg>
<div class="a" style="left:711.1px;top:243.4px;width:96.5px;height:23.799999999999983px;border:1px solid #c8c6c4;border-radius:2px;background:#fff"></div>
<div class="a" style="left:731.95px;top:252.00px;font-size:6.5px;line-height:7px;color:#252423;transform:scaleX(0.9563);transform-origin:0 0;">Add data fields here</div>
<div class="a" style="left:711.90px;top:281.00px;font-size:6.5px;line-height:7px;color:#252423;transform:scaleX(0.9255);transform-origin:0 0;">Filters on all pages</div>
<svg class="a" style="left:798.5px;top:284.9px;" width="7" height="1.4" viewBox="0 0 7 1.4"><circle cx="0.7" cy="0.7" r="0.55" fill="#605e5c"/><circle cx="3.5" cy="0.7" r="0.55" fill="#605e5c"/><circle cx="6.3" cy="0.7" r="0.55" fill="#605e5c"/></svg>
<div class="a" style="left:711.1px;top:294.0px;width:96.5px;height:23.30000000000001px;border:1px solid #c8c6c4;border-radius:2px;background:#fff"></div>
<div class="a" style="left:731.95px;top:302.00px;font-size:6.5px;line-height:7px;color:#252423;transform:scaleX(0.9563);transform-origin:0 0;">Add data fields here</div>
<div class="a" style="left:814.50px;top:52.00px;font-size:8.5px;line-height:10px;color:#252423;font-weight:bold;-webkit-text-stroke:0;transform:scaleX(0.9711);transform-origin:0 0;">Visualizations</div>
<svg class="a" style="left:896.2px;top:54.9px;" width="3.8" height="6.2" viewBox="0 0 3.8 6.2"><path d="M0.3 0.3L3.5 3.1L0.3 5.9" fill="none" stroke="#252423" stroke-width="1.1"/></svg>
<div class="a" style="left:830.2px;top:71.6px;width:11.4px;height:11.4px;background:#5f5e5c;border-radius:1px"></div>
<div class="a" style="left:831.4px;top:72.8px;width:9.0px;height:9.0px;background:#dcdcdc"></div>
<svg class="a" style="left:816.9px;top:72.6px;" width="9" height="9" viewBox="0 0 9 9"><path d="M0.5 0.5V8.5H8.5" fill="none" stroke="#3b3a39" stroke-width="0.9"/><rect x="1.5" y="1" width="4" height="2" fill="#2b88d8"/><rect x="1.5" y="4" width="6" height="2" fill="#3b3a39"/><rect x="1.5" y="6.5" width="6.5" height="1.5" fill="#8a8886"/></svg>
<svg class="a" style="left:831.5px;top:72.6px;" width="9" height="9" viewBox="0 0 9 9"><rect x="1" y="1" width="7" height="7" fill="none" stroke="#3b3a39" stroke-width="0.9"/><rect x="2.5" y="3" width="2" height="4" fill="#2b88d8"/><rect x="5" y="2" width="2" height="5" fill="#8a8886"/></svg>
<svg class="a" style="left:846.1px;top:72.6px;" width="9" height="9" viewBox="0 0 9 9"><path d="M0.5 0.5V8.5H8.5" fill="none" stroke="#3b3a39" stroke-width="0.9"/><rect x="1.5" y="1" width="7" height="2" fill="#2b88d8"/><rect x="1.5" y="4" width="5" height="2" fill="#3b3a39"/><rect x="1.5" y="6.5" width="4" height="1.5" fill="#8a8886"/></svg>
<svg class="a" style="left:860.3px;top:72.6px;" width="9" height="9" viewBox="0 0 9 9"><path d="M0.5 0.5V8.5H8.5" fill="none" stroke="#3b3a39" stroke-width="0.9"/><rect x="1.5" y="2" width="2" height="6" fill="#3b3a39"/><rect x="4" y="4" width="2" height="4" fill="#2b88d8"/><rect x="6.5" y="3" width="1.8" height="5" fill="#8a8886"/></svg>
<svg class="a" style="left:874.9px;top:72.6px;" width="9" height="9" viewBox="0 0 9 9"><path d="M0.5 0.5V8.5H8.5" fill="none" stroke="#3b3a39" stroke-width="0.9"/><rect x="1.5" y="1" width="7" height="2" fill="#2b88d8"/><rect x="1.5" y="4" width="7" height="2" fill="#3b3a39"/><rect x="1.5" y="6.5" width="7" height="1.5" fill="#8a8886"/></svg>
<svg class="a" style="left:889.6px;top:72.6px;" width="9" height="9" viewBox="0 0 9 9"><path d="M0.5 0.5V8.5H8.5" fill="none" stroke="#3b3a39" stroke-width="0.9"/><rect x="1.5" y="1" width="2" height="7" fill="#3b3a39"/><rect x="4" y="1" width="2" height="7" fill="#2b88d8"/><rect x="6.5" y="1" width="1.8" height="7" fill="#8a8886"/></svg>
<svg class="a" style="left:816.9px;top:85.5px;" width="9" height="9" viewBox="0 0 9 9"><path d="M0.5 0.5V8.5H8.5" fill="none" stroke="#3b3a39" stroke-width="0.9"/><path d="M1 6L3.5 3L5.5 5L8.5 1.5" fill="none" stroke="#3b3a39" stroke-width="0.9"/><path d="M1 7.5L4 5L6 6.5L8.5 4" fill="none" stroke="#2b88d8" stroke-width="0.9"/></svg>
<svg class="a" style="left:831.5px;top:85.5px;" width="9" height="9" viewBox="0 0 9 9"><path d="M0.5 8.5L3 2L5 5L6.5 1.5L8.5 8.5Z" fill="none" stroke="#3b3a39" stroke-width="0.8"/><path d="M0.8 8.5L3 5L5 7L6.5 4.5L8.5 8.5Z" fill="#2b88d8"/></svg>
<svg class="a" style="left:846.1px;top:85.5px;" width="9" height="9" viewBox="0 0 9 9"><path d="M0.5 0.5V8.5H8.5" fill="none" stroke="#3b3a39" stroke-width="0.9"/><path d="M1 1.5L3.5 4L6 1.5L8.5 4V6.5L6 4L3.5 6.5L1 4Z" fill="#2b88d8" stroke="#3b3a39" stroke-width="0.5"/></svg>
<svg class="a" style="left:860.3px;top:85.5px;" width="9" height="9" viewBox="0 0 9 9"><path d="M0.5 0.5V8.5H8.5" fill="none" stroke="#3b3a39" stroke-width="0.9"/><rect x="1.5" y="3" width="2" height="5" fill="#3b3a39"/><rect x="4.5" y="1.5" width="2" height="6.5" fill="#2b88d8"/><path d="M1 4L4 2L8 5" fill="none" stroke="#3b3a39" stroke-width="0.8"/></svg>
<svg class="a" style="left:874.9px;top:85.5px;" width="9" height="9" viewBox="0 0 9 9"><path d="M0.5 0.5V8.5H8.5" fill="none" stroke="#3b3a39" stroke-width="0.9"/><rect x="1.5" y="4" width="2" height="4" fill="#2b88d8"/><rect x="4.5" y="2" width="2" height="6" fill="#3b3a39"/><path d="M1 6L4 2L8 5" fill="none" stroke="#3b3a39" stroke-width="0.8"/></svg>
<svg class="a" style="left:889.6px;top:85.5px;" width="9" height="9" viewBox="0 0 9 9"><path d="M0.5 0.5V8.5H8.5" fill="none" stroke="#3b3a39" stroke-width="0.9"/><rect x="1.5" y="2" width="2" height="6" fill="#3b3a39"/><rect x="4" y="4" width="2" height="4" fill="#e66c37"/><rect x="6.5" y="2" width="1.8" height="6" fill="#2b88d8"/><path d="M1 1.5L4.5 5L8.5 1.5" fill="none" stroke="#e66c37" stroke-width="0.8"/></svg>
<svg class="a" style="left:816.9px;top:97.6px;" width="9" height="9" viewBox="0 0 9 9"><path d="M0.5 0.5V8.5H8.5" fill="none" stroke="#3b3a39" stroke-width="0.9"/><rect x="1.5" y="3" width="2" height="5" fill="#3b3a39"/><rect x="4.2" y="5" width="1.5" height="3" fill="#8a8886"/><rect x="6.2" y="1" width="1.8" height="7" fill="#2b88d8"/></svg>
<svg class="a" style="left:831.5px;top:97.6px;" width="9" height="9" viewBox="0 0 9 9"><path d="M0.5 1H8.5L7 5H2Z" fill="#2b88d8"/><path d="M2.5 5.5H6.5L5.5 8.5H3.5Z" fill="#2b88d8"/></svg>
<svg class="a" style="left:846.1px;top:97.6px;" width="9" height="9" viewBox="0 0 9 9"><path d="M0.5 0.5V8.5H8.5" fill="none" stroke="#3b3a39" stroke-width="0.9"/><circle cx="7.3" cy="1.5" r="1" fill="#3b3a39"/><circle cx="3" cy="3" r="0.9" fill="#2b88d8"/><circle cx="5.5" cy="4.5" r="0.9" fill="#2b88d8"/><circle cx="2.5" cy="6.3" r="1" fill="#3b3a39"/><circle cx="6.5" cy="6.5" r="0.8" fill="#2b88d8"/></svg>
<svg class="a" style="left:860.3px;top:97.6px;" width="9" height="9" viewBox="0 0 9 9"><circle cx="4.5" cy="4.5" r="3.8" fill="none" stroke="#3b3a39" stroke-width="0.9"/><path d="M4.5 4.5V0.8A3.7 3.7 0 0 1 8.2 4.5Z" fill="#2b88d8"/></svg>
<svg class="a" style="left:874.9px;top:97.6px;" width="9" height="9" viewBox="0 0 9 9"><circle cx="4.5" cy="4.5" r="3.3" fill="none" stroke="#2b88d8" stroke-width="2"/><path d="M4.5 1.2A3.3 3.3 0 0 1 7.8 4.5" fill="none" stroke="#3b3a39" stroke-width="2"/></svg>
<svg class="a" style="left:889.6px;top:97.6px;" width="9" height="9" viewBox="0 0 9 9"><rect x="0.5" y="0.5" width="8" height="8" fill="none" stroke="#3b3a39" stroke-width="0.8"/><rect x="1.5" y="1.5" width="2.5" height="2.5" fill="#2b88d8"/><rect x="1.5" y="5" width="2.5" height="2.5" fill="#2b88d8"/><path d="M5 2.5H7.5M5 6H7.5" stroke="#3b3a39" stroke-width="0.8"/></svg>
<svg class="a" style="left:816.9px;top:109.7px;" width="9" height="9" viewBox="0 0 9 9"><circle cx="4.2" cy="4.2" r="3.5" fill="none" stroke="#3b3a39" stroke-width="1.1"/><path d="M4.5 2.5L7 5L4.5 6.5Z" fill="#21a366"/><path d="M3 8.5H6" stroke="#3b3a39" stroke-width="0.9"/></svg>
<svg class="a" style="left:831.5px;top:109.7px;" width="9" height="9" viewBox="0 0 9 9"><path d="M0.8 1.5L3.5 0.8L5.5 2L8.2 1.2V7L5.5 8.2L3.5 7.2L0.8 8Z" fill="#2b88d8" stroke="#3b3a39" stroke-width="0.6"/></svg>
<svg class="a" style="left:846.1px;top:109.7px;" width="9" height="9" viewBox="0 0 9 9"><path d="M0.8 7A3.8 3.8 0 0 1 8.2 7" fill="none" stroke="#3b3a39" stroke-width="1.6"/><path d="M4.5 7L6 4" stroke="#2b88d8" stroke-width="0.9"/></svg>
<svg class="a" style="left:860.3px;top:109.7px;" width="9" height="9" viewBox="0 0 9 9"><rect x="0.5" y="1" width="8" height="7" fill="none" stroke="#3b3a39" stroke-width="0.9"/><rect x="2" y="2.5" width="5" height="4" fill="#2b88d8" opacity="0.8"/></svg>
<svg class="a" style="left:874.9px;top:109.7px;" width="9" height="9" viewBox="0 0 9 9"><rect x="0.5" y="0.5" width="8" height="8" fill="none" stroke="#3b3a39" stroke-width="0.9"/><path d="M2 3H7M2 6H7" stroke="#2b88d8" stroke-width="1.1"/></svg>
<svg class="a" style="left:889.6px;top:109.7px;" width="9" height="9" viewBox="0 0 9 9"><rect x="0.5" y="1" width="8" height="7" fill="none" stroke="#3b3a39" stroke-width="0.9"/><path d="M2 6L3.5 3.5L5 5L6.8 3" fill="none" stroke="#21a366" stroke-width="1"/><circle cx="6.5" cy="3.5" r="0.8" fill="#e81123"/></svg>
<svg class="a" style="left:816.9px;top:122.3px;" width="9" height="9" viewBox="0 0 9 9"><rect x="0.5" y="0.5" width="8" height="7" fill="none" stroke="#3b3a39" stroke-width="0.9"/><path d="M0.5 2.5H8.5" stroke="#3b3a39" stroke-width="0.6"/><path d="M4 5H8V8.5H5Z" fill="#fff" stroke="#3b3a39" stroke-width="0.7"/></svg>
<svg class="a" style="left:831.5px;top:122.3px;" width="9" height="9" viewBox="0 0 9 9"><rect x="0.5" y="0.5" width="8" height="8" fill="none" stroke="#3b3a39" stroke-width="0.9"/><path d="M3.2 0.5V8.5M5.8 0.5V8.5" stroke="#3b3a39" stroke-width="0.7"/></svg>
<svg class="a" style="left:846.1px;top:122.3px;" width="9" height="9" viewBox="0 0 9 9"><rect x="0.5" y="0.5" width="8" height="8" fill="none" stroke="#3b3a39" stroke-width="0.9"/><rect x="3.5" y="1.5" width="2" height="6" fill="#2b88d8"/><rect x="6" y="1.5" width="2" height="6" fill="#2b88d8"/><path d="M0.5 2.5H8.5" stroke="#3b3a39" stroke-width="0.6"/></svg>
<svg class="a" style="left:860.3px;top:122.3px;" width="9" height="9" viewBox="0 0 9 9"><path d="M0.5 0.5V8.5H8.5" fill="none" stroke="#3b3a39" stroke-width="0.9"/><path d="M2 6H4V3.5H6M6 2H8" fill="none" stroke="#3b3a39" stroke-width="0.8"/><circle cx="7.5" cy="2" r="0.9" fill="#2b88d8"/><circle cx="5" cy="6" r="0.9" fill="#2b88d8"/></svg>
<svg class="a" style="left:874.9px;top:122.3px;" width="9" height="9" viewBox="0 0 9 9"><path d="M0.5 4.5H4" stroke="#2b88d8" stroke-width="0.9"/><circle cx="1.5" cy="4.5" r="1.2" fill="#2b88d8"/><rect x="4" y="0.5" width="3.5" height="8" rx="1" fill="#2b88d8"/><path d="M4.5 3H7M4.5 6H7" stroke="#fff" stroke-width="0.6"/></svg>
<svg class="a" style="left:889.6px;top:122.3px;" width="9" height="9" viewBox="0 0 9 9"><path d="M0.5 0.8H8.5V6H3L1.2 8V6H0.5Z" fill="none" stroke="#2b88d8" stroke-width="0.9"/></svg>
<svg class="a" style="left:816.9px;top:134.7px;" width="9" height="9" viewBox="0 0 9 9"><rect x="0.5" y="1" width="8" height="7.5" fill="none" stroke="#2b88d8" stroke-width="0.9"/><path d="M2 7L7 2" stroke="#2b88d8" stroke-width="1"/><circle cx="1.5" cy="1.5" r="1.3" fill="#e81123"/><circle cx="7.5" cy="7" r="1.1" fill="#e81123"/></svg>
<svg class="a" style="left:831.5px;top:134.7px;" width="9" height="9" viewBox="0 0 9 9"><rect x="0.5" y="1.5" width="8" height="6" rx="2" fill="none" stroke="#3b3a39" stroke-width="0.9"/><path d="M2 5.5L3 3.5L4 5.5L5 3.5L6 5.5L7 3.5" fill="none" stroke="#3b3a39" stroke-width="0.8"/></svg>
<svg class="a" style="left:846.1px;top:138.2px;" width="9" height="2" viewBox="0 0 9 2"><circle cx="1" cy="1" r="0.65" fill="#3b3a39"/><circle cx="4.5" cy="1" r="0.65" fill="#3b3a39"/><circle cx="8" cy="1" r="0.65" fill="#3b3a39"/></svg>
<svg class="a" style="left:814px;top:146px;" width="91" height="1" viewBox="0 0 91 1"><line x1="0" y1="0.5" x2="91" y2="0.5" stroke="#c8c6c4" stroke-width="0.8" stroke-dasharray="1 1.2"/></svg>
<svg class="a" style="left:823.2px;top:150.2px;" width="11.3" height="10.8" viewBox="0 0 11.3 10.8"><rect x="0.6" y="0.6" width="10" height="3" fill="none" stroke="#3b3a39" stroke-width="0.9"/><rect x="0.6" y="3.9" width="10" height="3" fill="none" stroke="#3b3a39" stroke-width="0.9"/><rect x="0.6" y="7.2" width="10" height="3" fill="none" stroke="#3b3a39" stroke-width="0.9"/></svg>
<div class="a" style="left:818.4px;top:163.4px;width:20.6px;height:1.8px;background:#e9b10c;"></div>
<svg class="a" style="left:844px;top:150.2px;" width="11" height="11" viewBox="0 0 11 11"><rect x="0.6" y="0.6" width="9" height="3.2" rx="1.5" fill="none" stroke="#3b3a39" stroke-width="1"/><path d="M9.6 2.2H10.4V5H5V6.5" fill="none" stroke="#3b3a39" stroke-width="0.9"/><rect x="4" y="6.5" width="2" height="4" rx="0.8" fill="none" stroke="#3b3a39" stroke-width="0.9"/></svg>
<svg class="a" style="left:864.4px;top:150px;" width="12" height="11.5" viewBox="0 0 12 11.5"><circle cx="5" cy="5" r="4.2" fill="none" stroke="#3b3a39" stroke-width="1"/><path d="M2 5.5L4 4L6 6L8 4.5" fill="none" stroke="#3b3a39" stroke-width="0.8"/><path d="M8 8L11.2 11" stroke="#3b3a39" stroke-width="1.1"/></svg>
<div class="a" style="left:818.40px;top:169.00px;font-size:6.5px;line-height:7px;color:#252423;transform:scaleX(0.8712);transform-origin:0 0;">Axis</div>
<div class="a" style="left:814.8px;top:179.3px;width:87.8px;height:19.0px;border:1px dotted #b3b0ad;background:#faf9f8"></div>
<div class="a" style="left:816.2px;top:181.4px;width:85.0px;height:11.799999999999983px;background:#e1dfdd;border:1px solid #d2d0ce;border-radius:1px"></div>
<div class="a" style="left:818.50px;top:184.00px;font-size:6.5px;line-height:7px;color:#252423;transform:scaleX(0.9668);transform-origin:0 0;">Category</div>
<svg class="a" style="left:885.5px;top:186.0px;" width="5.5" height="3.0" viewBox="0 0 5.5 3.0"><path d="M0.3 0.3L2.75 2.7L5.2 0.3" fill="none" stroke="#323130" stroke-width="0.8"/></svg>
<svg class="a" style="left:894px;top:184.70000000000002px;" width="5.2" height="5.2" viewBox="0 0 5.2 5.2"><path d="M0.4 0.4L4.8 4.8M4.8 0.4L0.4 4.8" stroke="#323130" stroke-width="0.8"/></svg>
<div class="a" style="left:818.40px;top:204.00px;font-size:6.5px;line-height:7px;color:#252423;transform:scaleX(0.8754);transform-origin:0 0;">Legend</div>
<div class="a" style="left:814.8px;top:214.8px;width:87.8px;height:16.0px;border:1px dotted #b3b0ad;background:transparent"></div>
<div class="a" style="left:816.2px;top:216.9px;width:85.0px;height:11.599999999999994px;background:#e1dfdd;border:1px solid #d2d0ce;border-radius:1px"></div>
<div class="a" style="left:818.50px;top:219.00px;font-size:6.5px;line-height:7px;color:#252423;transform:scaleX(0.9688);transform-origin:0 0;">Defect Type</div>
<svg class="a" style="left:885.5px;top:221.39999999999998px;" width="5.5" height="3.0" viewBox="0 0 5.5 3.0"><path d="M0.3 0.3L2.75 2.7L5.2 0.3" fill="none" stroke="#323130" stroke-width="0.8"/></svg>
<svg class="a" style="left:894px;top:220.1px;" width="5.2" height="5.2" viewBox="0 0 5.2 5.2"><path d="M0.4 0.4L4.8 4.8M4.8 0.4L0.4 4.8" stroke="#323130" stroke-width="0.8"/></svg>
<div class="a" style="left:818.40px;top:237.00px;font-size:6.5px;line-height:7px;color:#252423;transform:scaleX(0.9533);transform-origin:0 0;">Values</div>
<div class="a" style="left:814.8px;top:246.8px;width:87.8px;height:16.0px;border:1px dotted #b3b0ad;background:transparent"></div>
<div class="a" style="left:816.2px;top:248.8px;width:85.0px;height:11.800000000000011px;background:#e1dfdd;border:1px solid #d2d0ce;border-radius:1px"></div>
<div class="a" style="left:818.50px;top:251.00px;font-size:6.5px;line-height:7px;color:#252423;transform:scaleX(0.9448);transform-origin:0 0;">Total Defect Qty Max</div>
<svg class="a" style="left:885.5px;top:253.4px;" width="5.5" height="3.0" viewBox="0 0 5.5 3.0"><path d="M0.3 0.3L2.75 2.7L5.2 0.3" fill="none" stroke="#323130" stroke-width="0.8"/></svg>
<svg class="a" style="left:894px;top:252.10000000000002px;" width="5.2" height="5.2" viewBox="0 0 5.2 5.2"><path d="M0.4 0.4L4.8 4.8M4.8 0.4L0.4 4.8" stroke="#323130" stroke-width="0.8"/></svg>
<div class="a" style="left:818.40px;top:269.00px;font-size:6.5px;line-height:7px;color:#252423;transform:scaleX(0.9525);transform-origin:0 0;">Tooltips</div>
<div class="a" style="left:814.8px;top:279.2px;width:87.8px;height:15.0px;border:1px dotted #b3b0ad;background:#ffffff"></div>
<div class="a" style="left:820.00px;top:284.00px;font-size:6.5px;line-height:7px;color:#252423;transform:scaleX(0.9684);transform-origin:0 0;">Add data fields here</div>
<div class="a" style="left:819.80px;top:302.00px;font-size:8.9px;line-height:10px;color:#252423;transform:scaleX(1.0050);transform-origin:0 0;-webkit-text-stroke:0.4px currentColor">Drill through</div>
<div class="a" style="left:816.90px;top:320.00px;font-size:6.5px;line-height:7px;color:#252423;transform:scaleX(0.9495);transform-origin:0 0;">Cross-report</div>
<div class="a" style="left:820.80px;top:335.00px;font-size:6.5px;line-height:7px;color:#252423;transform:scaleX(1.0511);transform-origin:0 0;">Off</div>
<svg class="a" style="left:832.2px;top:335.4px;" width="16.5" height="6.6" viewBox="0 0 16.5 6.6"><circle cx="3.3" cy="3.3" r="2.7" fill="none" stroke="#3b3a39" stroke-width="1.1"/><path d="M6 3.3H16.2" stroke="#3b3a39" stroke-width="1.1"/></svg>
<div class="a" style="left:817.00px;top:353.00px;font-size:6.5px;line-height:7px;color:#252423;transform:scaleX(0.9307);transform-origin:0 0;">Keep all filters</div>
<div class="a" style="left:820.80px;top:368.00px;font-size:6.5px;line-height:7px;color:#252423;transform:scaleX(0.9802);transform-origin:0 0;">On</div>
<svg class="a" style="left:832.2px;top:368.6px;" width="16.5" height="7" viewBox="0 0 16.5 7"><path d="M0.3 3.5H12" stroke="#3b3a39" stroke-width="1.1"/><circle cx="12.8" cy="3.5" r="3.3" fill="#3b3a39"/></svg>
<div class="a" style="left:815.0px;top:383.7px;width:87.6px;height:13.2px;border:1px dotted #b3b0ad;background:#ffffff"></div>
<div class="a" style="left:819.50px;top:387.00px;font-size:6.5px;line-height:7px;color:#252423;transform:scaleX(0.9786);transform-origin:0 0;">Add drill-through fields here</div>
<div class="a" style="left:770.0px;top:44.7px;width:75.5px;height:20.3px;background:#fff;box-shadow:0 0.5px 2.5px rgba(0,0,0,0.22)"></div>
<svg class="a" style="left:831.5px;top:64.5px;" width="8" height="4" viewBox="0 0 8 4"><path d="M0 0L4 3.6L8 0Z" fill="#fff"/></svg>
<div class="a" style="left:776.30px;top:51.00px;font-size:6.5px;line-height:7px;color:#252423;font-weight:bold;-webkit-text-stroke:0;transform:scaleX(0.9384);transform-origin:0 0;">Stacked column chart</div>
<div class="a" style="left:912.80px;top:53.00px;font-size:8.3px;line-height:10px;color:#252423;font-weight:bold;-webkit-text-stroke:0;transform:scaleX(0.8839);transform-origin:0 0;">Fields</div>
<svg class="a" style="left:989.8px;top:55.0px;" width="3.8" height="6.2" viewBox="0 0 3.8 6.2"><path d="M0.3 0.3L3.5 3.1L0.3 5.9" fill="none" stroke="#252423" stroke-width="1.1"/></svg>
<div class="a" style="left:908.6px;top:72.5px;width:89.1px;height:15.0px;border:1px solid #c8c6c4;border-radius:2px;background:#fff"></div>
<svg class="a" style="left:914px;top:75.8px;" width="9" height="9" viewBox="0 0 9 9"><circle cx="5.5" cy="3.5" r="2.7" fill="none" stroke="#323130" stroke-width="0.8"/><path d="M3.5 5.5L0.6 8.4" stroke="#323130" stroke-width="0.9"/></svg>
<div class="a" style="left:926.80px;top:76.00px;font-size:7.0px;line-height:7px;color:#252423;transform:scaleX(0.9239);transform-origin:0 0;">Search</div>
<div class="a" style="left:906px;top:90.0px;width:94px;height:0.9px;background:#d2d0ce;"></div>
<svg class="a" style="left:908.3px;top:98.3px;" width="6.2" height="3.4" viewBox="0 0 6.2 3.4"><path d="M0.3 3.1L3.1 0.3L5.9 3.1" fill="none" stroke="#323130" stroke-width="1.0"/></svg>
<svg class="a" style="left:918.3px;top:98.9px;" width="7.2" height="8" viewBox="0 0 7.2 8"><rect x="0" y="0" width="6" height="7.5" rx="0.8" fill="#323130"/><rect x="1.3" y="1.2" width="3.3" height="1.6" fill="#edebe9"/></svg>
<svg class="a" style="left:921.5px;top:102.8px;" width="6" height="6" viewBox="0 0 6 6"><circle cx="3" cy="3" r="2.8" fill="#e9b10c"/><path d="M1.6 3L2.6 4L4.5 2" fill="none" stroke="#323130" stroke-width="0.7"/></svg>
<div class="a" style="left:931.40px;top:98.00px;font-size:6.6px;line-height:7px;color:#252423;font-weight:bold;-webkit-text-stroke:0;transform:scaleX(0.8834);transform-origin:0 0;">Metrics</div>
<div class="a" style="left:922.5px;top:114.4px;width:6.6px;height:6.6px;border:0.9px solid #605e5c;background:#fff;border-radius:0.5px"></div>
<svg class="a" style="left:931.8px;top:114.0px;" width="5.4" height="7.2" viewBox="0 0 5.4 7.2"><rect x="0" y="0" width="5.4" height="7.2" rx="0.8" fill="#323130"/><rect x="1.2" y="1.1" width="3" height="1.5" fill="#edebe9"/><rect x="1.2" y="3.6" width="1.2" height="1" fill="#edebe9"/><rect x="3" y="3.6" width="1.2" height="1" fill="#edebe9"/></svg>
<div class="a" style="left:942.20px;top:114.00px;font-size:6.6px;line-height:7px;color:#252423;transform:scaleX(0.8445);transform-origin:0 0;">Defect Qty ...</div>
<svg class="a" style="left:912.6px;top:128.4px;" width="6.2" height="3.4" viewBox="0 0 6.2 3.4"><path d="M0.3 0.3L3.1 3.1L5.9 0.3" fill="none" stroke="#323130" stroke-width="1.0"/></svg>
<svg class="a" style="left:921.8px;top:126.4px;" width="3.8" height="7.2" viewBox="0 0 3.8 7.2"><rect x="0" y="0" width="3.8" height="7.2" rx="0.6" fill="#323130"/><circle cx="1.9" cy="1.6" r="0.7" fill="#e81123"/><circle cx="1.9" cy="3.6" r="0.7" fill="#e9b10c"/><circle cx="1.9" cy="5.6" r="0.7" fill="#7a7a7a"/></svg>
<div class="a" style="left:934.20px;top:127.00px;font-size:6.6px;line-height:7px;color:#252423;transform:scaleX(0.9444);transform-origin:0 0;">Total Defect Qty</div>
<div class="a" style="left:922.5px;top:139.2px;width:6.6px;height:6.6px;background:#e9b10c;border-radius:0.5px"></div>
<svg class="a" style="left:922.5px;top:139.2px;" width="6.6" height="6.6" viewBox="0 0 6.6 6.6"><path d="M1.5 3.3L2.8 4.6L5.2 2" fill="none" stroke="#323130" stroke-width="0.7"/></svg>
<svg class="a" style="left:931.8px;top:138.8px;" width="5.4" height="7.2" viewBox="0 0 5.4 7.2"><rect x="0" y="0" width="5.4" height="7.2" rx="0.8" fill="#323130"/><rect x="1.2" y="1.1" width="3" height="1.5" fill="#edebe9"/><rect x="1.2" y="3.6" width="1.2" height="1" fill="#edebe9"/><rect x="3" y="3.6" width="1.2" height="1" fill="#edebe9"/></svg>
<div class="a" style="left:942.50px;top:139.00px;font-size:6.6px;line-height:7px;color:#252423;transform:scaleX(0.9203);transform-origin:0 0;">Total Defect...</div>
<div class="a" style="left:922.5px;top:151.6px;width:6.6px;height:6.6px;border:0.9px solid #605e5c;background:#fff;border-radius:0.5px"></div>
<svg class="a" style="left:931.8px;top:151.2px;" width="5.4" height="7.2" viewBox="0 0 5.4 7.2"><rect x="0" y="0" width="5.4" height="7.2" rx="0.8" fill="#323130"/><rect x="1.2" y="1.1" width="3" height="1.5" fill="#edebe9"/><rect x="1.2" y="3.6" width="1.2" height="1" fill="#edebe9"/><rect x="3" y="3.6" width="1.2" height="1" fill="#edebe9"/></svg>
<div class="a" style="left:942.50px;top:152.00px;font-size:6.6px;line-height:7px;color:#252423;transform:scaleX(0.9203);transform-origin:0 0;">Total Defect...</div>
<svg class="a" style="left:912.6px;top:165.8px;" width="6.2" height="3.4" viewBox="0 0 6.2 3.4"><path d="M0.3 0.3L3.1 3.1L5.9 0.3" fill="none" stroke="#323130" stroke-width="1.0"/></svg>
<svg class="a" style="left:921.8px;top:163.6px;" width="3.8" height="7.2" viewBox="0 0 3.8 7.2"><rect x="0" y="0" width="3.8" height="7.2" rx="0.6" fill="#323130"/><circle cx="1.9" cy="1.6" r="0.7" fill="#e81123"/><circle cx="1.9" cy="3.6" r="0.7" fill="#7a7a7a"/><circle cx="1.9" cy="5.6" r="0.7" fill="#21a366"/></svg>
<div class="a" style="left:934.20px;top:164.00px;font-size:6.6px;line-height:7px;color:#252423;transform:scaleX(0.9444);transform-origin:0 0;">Total Downtim...</div>
<div class="a" style="left:922.5px;top:176.3px;width:6.6px;height:6.6px;border:0.9px solid #605e5c;background:#fff;border-radius:0.5px"></div>
<svg class="a" style="left:931.8px;top:175.9px;" width="5.4" height="7.2" viewBox="0 0 5.4 7.2"><rect x="0" y="0" width="5.4" height="7.2" rx="0.8" fill="#323130"/><rect x="1.2" y="1.1" width="3" height="1.5" fill="#edebe9"/><rect x="1.2" y="3.6" width="1.2" height="1" fill="#edebe9"/><rect x="3" y="3.6" width="1.2" height="1" fill="#edebe9"/></svg>
<div class="a" style="left:942.50px;top:176.00px;font-size:6.6px;line-height:7px;color:#252423;transform:scaleX(0.8918);transform-origin:0 0;">Total Down...</div>
<div class="a" style="left:922.5px;top:188.7px;width:6.6px;height:6.6px;border:0.9px solid #605e5c;background:#fff;border-radius:0.5px"></div>
<svg class="a" style="left:931.8px;top:188.3px;" width="5.4" height="7.2" viewBox="0 0 5.4 7.2"><rect x="0" y="0" width="5.4" height="7.2" rx="0.8" fill="#323130"/><rect x="1.2" y="1.1" width="3" height="1.5" fill="#edebe9"/><rect x="1.2" y="3.6" width="1.2" height="1" fill="#edebe9"/><rect x="3" y="3.6" width="1.2" height="1" fill="#edebe9"/></svg>
<div class="a" style="left:942.50px;top:189.00px;font-size:6.6px;line-height:7px;color:#252423;transform:scaleX(0.8918);transform-origin:0 0;">Total Down...</div>
<svg class="a" style="left:908.3px;top:204.3px;" width="6.2" height="3.4" viewBox="0 0 6.2 3.4"><path d="M0.3 3.1L3.1 0.3L5.9 3.1" fill="none" stroke="#323130" stroke-width="1.0"/></svg>
<svg class="a" style="left:918.3px;top:204.3px;" width="8" height="7" viewBox="0 0 8 7"><rect x="0" y="0" width="7.2" height="6.6" fill="#323130"/><path d="M0.5 1.8H6.7M2.4 1.8V6.1M4.8 1.8V6.1" stroke="#b0aeac" stroke-width="0.55"/></svg>
<svg class="a" style="left:920.9px;top:208.10000000000002px;" width="6" height="6" viewBox="0 0 6 6"><circle cx="3" cy="3" r="2.8" fill="#e9b10c"/><path d="M1.6 3L2.6 4L4.5 2" fill="none" stroke="#323130" stroke-width="0.7"/></svg>
<div class="a" style="left:931.10px;top:203.00px;font-size:6.6px;line-height:7px;color:#252423;font-weight:bold;-webkit-text-stroke:0;transform:scaleX(0.9233);transform-origin:0 0;">Category</div>
<div class="a" style="left:922.5px;top:219.3px;width:6.6px;height:6.6px;background:#e9b10c;border-radius:0.5px"></div>
<svg class="a" style="left:922.5px;top:219.3px;" width="6.6" height="6.6" viewBox="0 0 6.6 6.6"><path d="M1.5 3.3L2.8 4.6L5.2 2" fill="none" stroke="#323130" stroke-width="0.7"/></svg>
<div class="a" style="left:942.20px;top:219.00px;font-size:6.6px;line-height:7px;color:#252423;transform:scaleX(0.9527);transform-origin:0 0;">Category</div>
<svg class="a" style="left:908.3px;top:235.4px;" width="6.2" height="3.4" viewBox="0 0 6.2 3.4"><path d="M0.3 0.3L3.1 3.1L5.9 0.3" fill="none" stroke="#323130" stroke-width="1.0"/></svg>
<svg class="a" style="left:918.3px;top:234.0px;" width="8" height="7" viewBox="0 0 8 7"><rect x="0" y="0" width="7.2" height="6.6" fill="#323130"/><path d="M0.5 1.8H6.7M2.4 1.8V6.1M4.8 1.8V6.1" stroke="#b0aeac" stroke-width="0.55"/></svg>
<div class="a" style="left:931.10px;top:233.00px;font-size:6.6px;line-height:7px;color:#252423;transform:scaleX(0.8969);transform-origin:0 0;">Date</div>
<svg class="a" style="left:908.3px;top:248.3px;" width="6.2" height="3.4" viewBox="0 0 6.2 3.4"><path d="M0.3 3.1L3.1 0.3L5.9 3.1" fill="none" stroke="#323130" stroke-width="1.0"/></svg>
<svg class="a" style="left:918.3px;top:248.0px;" width="8" height="7" viewBox="0 0 8 7"><rect x="0" y="0" width="7.2" height="6.6" fill="#323130"/><path d="M0.5 1.8H6.7M2.4 1.8V6.1M4.8 1.8V6.1" stroke="#b0aeac" stroke-width="0.55"/></svg>
<div class="a" style="left:931.10px;top:247.00px;font-size:6.6px;line-height:7px;color:#252423;transform:scaleX(0.9443);transform-origin:0 0;">Defect</div>
<div class="a" style="left:922.5px;top:263.5px;width:6.6px;height:6.6px;border:0.9px solid #605e5c;background:#fff;border-radius:0.5px"></div>
<div class="a" style="left:942.20px;top:264.00px;font-size:6.6px;line-height:7px;color:#252423;transform:scaleX(0.9443);transform-origin:0 0;">Defect</div>
<svg class="a" style="left:908.3px;top:278.8px;" width="6.2" height="3.4" viewBox="0 0 6.2 3.4"><path d="M0.3 3.1L3.1 0.3L5.9 3.1" fill="none" stroke="#323130" stroke-width="1.0"/></svg>
<svg class="a" style="left:918.3px;top:278.6px;" width="8" height="7" viewBox="0 0 8 7"><rect x="0" y="0" width="7.2" height="6.6" fill="#323130"/><path d="M0.5 1.8H6.7M2.4 1.8V6.1M4.8 1.8V6.1" stroke="#b0aeac" stroke-width="0.55"/></svg>
<svg class="a" style="left:920.9px;top:282.40000000000003px;" width="6" height="6" viewBox="0 0 6 6"><circle cx="3" cy="3" r="2.8" fill="#e9b10c"/><path d="M1.6 3L2.6 4L4.5 2" fill="none" stroke="#323130" stroke-width="0.7"/></svg>
<div class="a" style="left:931.10px;top:278.00px;font-size:6.6px;line-height:7px;color:#252423;font-weight:bold;-webkit-text-stroke:0;transform:scaleX(0.9081);transform-origin:0 0;">Defect Type</div>
<div class="a" style="left:922.5px;top:293.4px;width:6.6px;height:6.6px;background:#e9b10c;border-radius:0.5px"></div>
<svg class="a" style="left:922.5px;top:293.4px;" width="6.6" height="6.6" viewBox="0 0 6.6 6.6"><path d="M1.5 3.3L2.8 4.6L5.2 2" fill="none" stroke="#323130" stroke-width="0.7"/></svg>
<div class="a" style="left:942.20px;top:293.00px;font-size:6.6px;line-height:7px;color:#252423;transform:scaleX(0.9265);transform-origin:0 0;">Defect Type</div>
<svg class="a" style="left:908.3px;top:309.7px;" width="6.2" height="3.4" viewBox="0 0 6.2 3.4"><path d="M0.3 0.3L3.1 3.1L5.9 0.3" fill="none" stroke="#323130" stroke-width="1.0"/></svg>
<svg class="a" style="left:918.3px;top:308.4px;" width="8" height="7" viewBox="0 0 8 7"><rect x="0" y="0" width="7.2" height="6.6" fill="#323130"/><path d="M0.5 1.8H6.7M2.4 1.8V6.1M4.8 1.8V6.1" stroke="#b0aeac" stroke-width="0.55"/></svg>
<div class="a" style="left:931.10px;top:308.00px;font-size:6.6px;line-height:7px;color:#252423;transform:scaleX(0.9501);transform-origin:0 0;">Material Type</div>
<svg class="a" style="left:908.3px;top:323.29999999999995px;" width="6.2" height="3.4" viewBox="0 0 6.2 3.4"><path d="M0.3 0.3L3.1 3.1L5.9 0.3" fill="none" stroke="#323130" stroke-width="1.0"/></svg>
<svg class="a" style="left:918.3px;top:322.0px;" width="8" height="7" viewBox="0 0 8 7"><rect x="0" y="0" width="7.2" height="6.6" fill="#323130"/><path d="M0.5 1.8H6.7M2.4 1.8V6.1M4.8 1.8V6.1" stroke="#b0aeac" stroke-width="0.55"/></svg>
<div class="a" style="left:931.10px;top:321.00px;font-size:6.6px;line-height:7px;color:#252423;transform:scaleX(0.9314);transform-origin:0 0;">Plant</div>
<svg class="a" style="left:908.3px;top:337.4px;" width="6.2" height="3.4" viewBox="0 0 6.2 3.4"><path d="M0.3 0.3L3.1 3.1L5.9 0.3" fill="none" stroke="#323130" stroke-width="1.0"/></svg>
<svg class="a" style="left:918.3px;top:336.2px;" width="8" height="7" viewBox="0 0 8 7"><rect x="0" y="0" width="7.2" height="6.6" fill="#323130"/><path d="M0.5 1.8H6.7M2.4 1.8V6.1M4.8 1.8V6.1" stroke="#b0aeac" stroke-width="0.55"/></svg>
<div class="a" style="left:931.10px;top:335.00px;font-size:6.6px;line-height:7px;color:#252423;transform:scaleX(0.9327);transform-origin:0 0;">Vendor</div>
<div class="a" style="left:116px;top:543px;width:20.8px;height:18px;background:#dadada;"></div>
<svg class="a" style="left:119.5px;top:549.3px;" width="3" height="5" viewBox="0 0 3 5"><path d="M2.5 0.3L0.4 2.5L2.5 4.7" fill="none" stroke="#a19f9d" stroke-width="0.7"/></svg>
<svg class="a" style="left:129.8px;top:549.3px;" width="3" height="5" viewBox="0 0 3 5"><path d="M0.5 0.3L2.6 2.5L0.5 4.7" fill="none" stroke="#a19f9d" stroke-width="0.7"/></svg>
<div class="a" style="left:136.8px;top:543px;width:39.6px;height:18px;background:#ffffff;"></div>
<div class="a" style="left:136.8px;top:559.5px;width:39.6px;height:1.5px;background:#e9b10c;"></div>
<div class="a" style="left:146.90px;top:549.00px;font-size:6.9px;line-height:7px;color:#252423;transform:scaleX(0.8561);transform-origin:0 0;">Page 1</div>
<div class="a" style="left:176.4px;top:543px;width:20.4px;height:18px;background:#e9b10c;"></div>
<svg class="a" style="left:183.2px;top:549.6px;" width="6" height="6" viewBox="0 0 6 6"><path d="M3 0.2V5.8M0.2 3H5.8" stroke="#24305a" stroke-width="1.05"/></svg>
</body></html>
